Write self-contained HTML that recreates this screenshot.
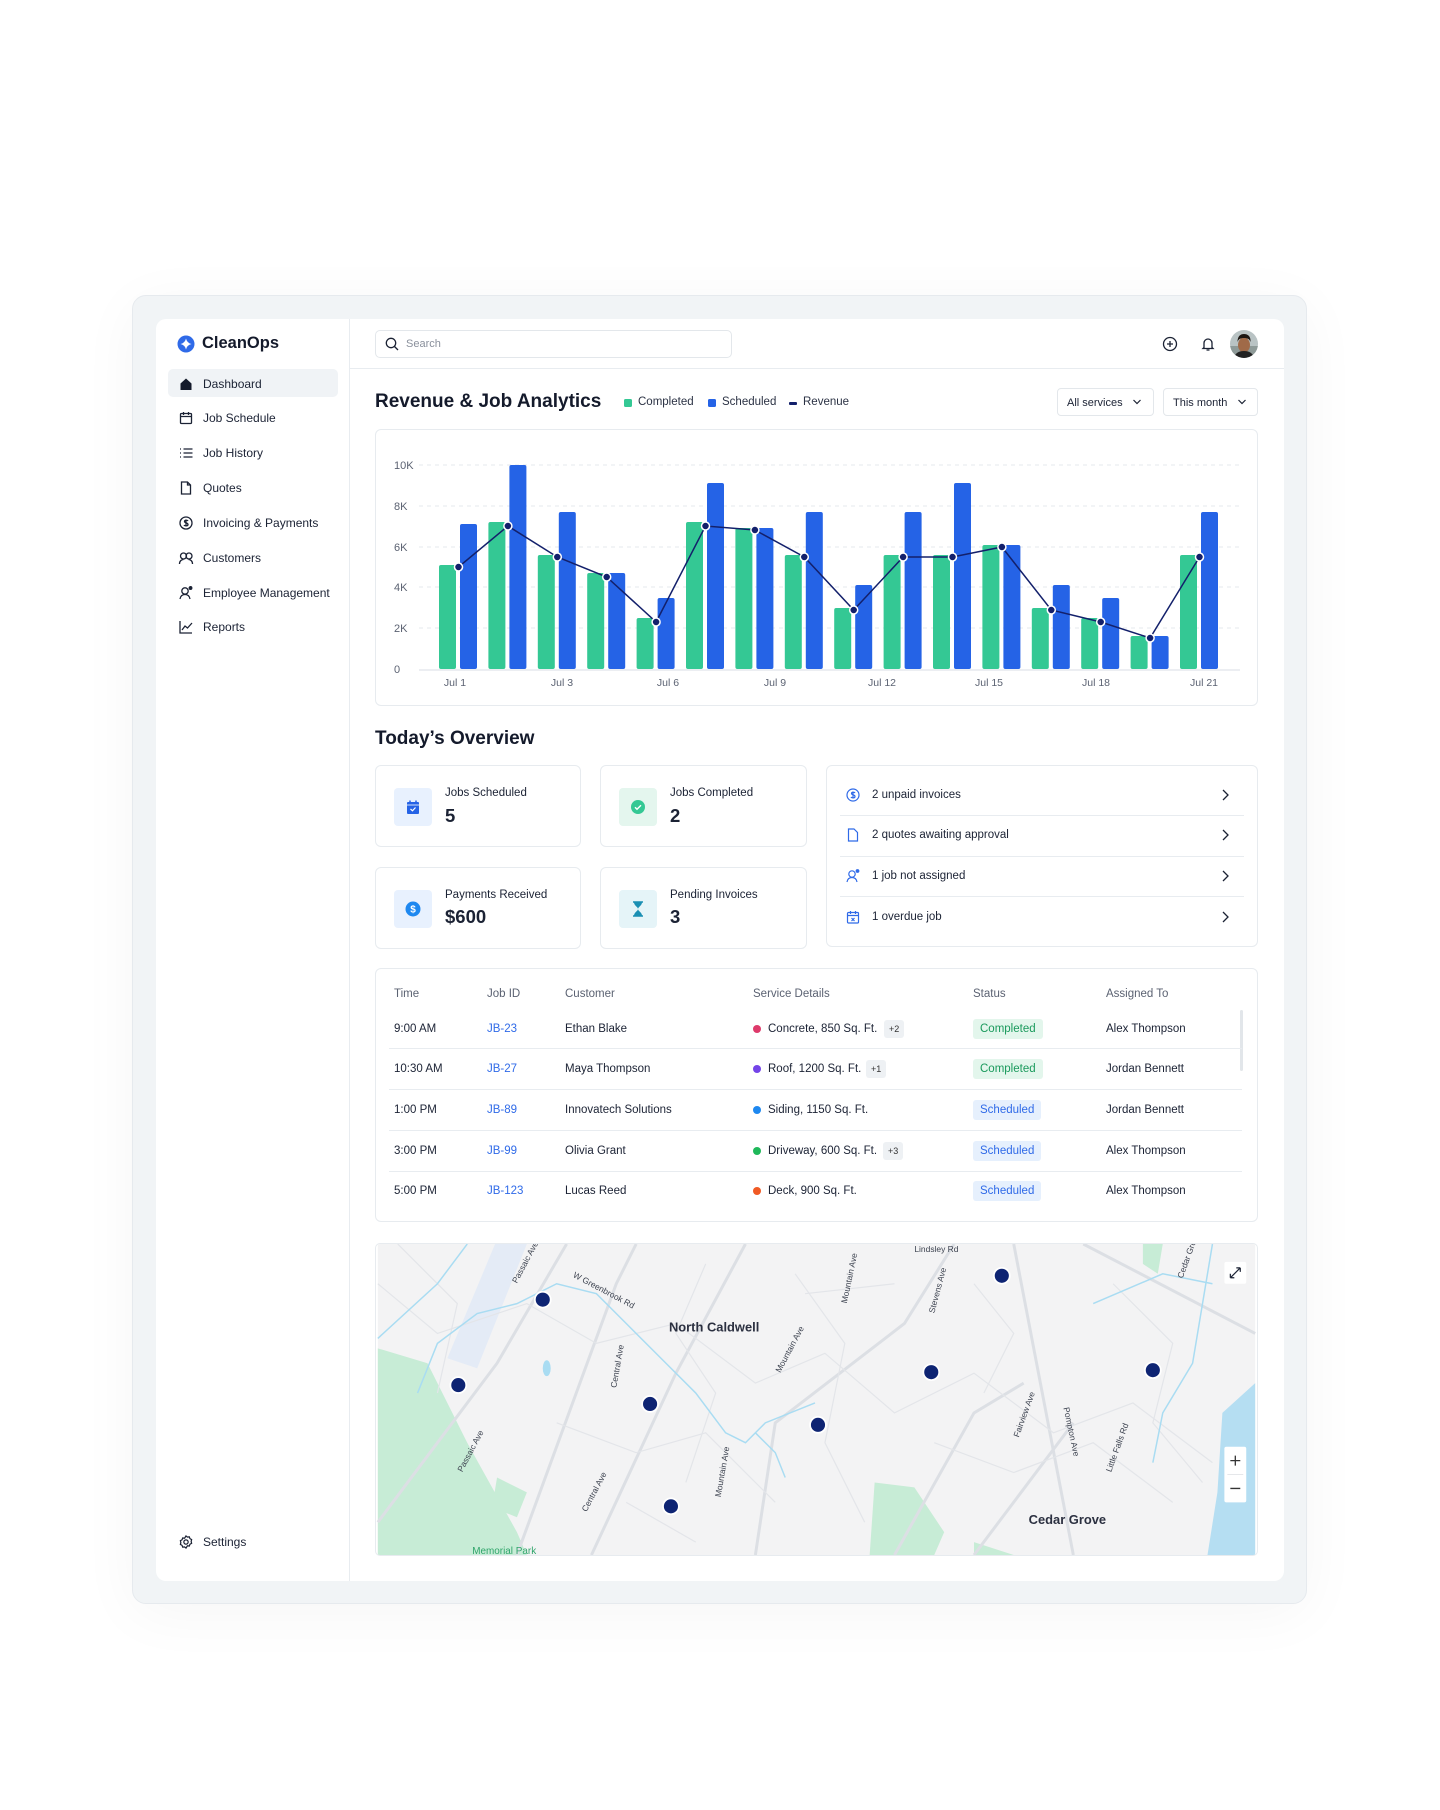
<!DOCTYPE html>
<html><head><meta charset="utf-8">
<style>
*{margin:0;padding:0;box-sizing:border-box}
body{width:1440px;height:1810px;background:#fff;font-family:"Liberation Sans",sans-serif;color:#1b2234;position:relative;overflow:hidden}
.a{position:absolute}
.frame{left:132px;top:295px;width:1175px;height:1309px;background:#f1f4f6;border:1px solid #e6eaee;border-radius:14px;box-shadow:0 10px 60px rgba(0,0,0,0.04)}
.inner{left:156px;top:319px;width:1128px;height:1262px;background:#fff;border-radius:10px}
.nav{left:203px;font-size:12px;color:#1b2234;transform:translateY(-50%)}
.ic{transform:translate(-50%,-50%)}
.card{background:#fff;border:1px solid #e7ebef;border-radius:6px}
.sm{font-size:12px}
.th{font-size:11.5px;color:#5b6272;transform:translateY(-50%)}
.td{font-size:11.5px;color:#1b2234;transform:translateY(-50%)}
.jid{color:#2f6ae8}
.badge{font-size:11.5px;padding:4px 7px;border-radius:3px;transform:translateY(-50%)}
.bc{background:#e3f6ec;color:#1a9a5c}
.bs{background:#e6f0fd;color:#2f6ae8}
.plus{font-size:9px;background:#eef1f4;color:#333;padding:4px 5px;border-radius:3px;transform:translateY(-50%)}
.dot{width:8px;height:8px;border-radius:50%;transform:translateY(-50%)}
.rowline{left:389px;width:853px;height:1px;background:#e8ecf0}
</style></head><body>
<div class="a frame"></div>
<div class="a inner"></div>
<div class="a" style="left:349px;top:319px;width:1px;height:1262px;background:#e8ecf0"></div>
<div class="a" style="left:350px;top:368px;width:934px;height:1px;background:#e8ecf0"></div>

<svg class="a" style="left:177px;top:335px" width="18" height="18" viewBox="0 0 18 18"><circle cx="9" cy="9" r="8.5" fill="#2f6ae8"/><path d="M9 3.5 Q10 8 14.5 9 Q10 10 9 14.5 Q8 10 3.5 9 Q8 8 9 3.5Z" fill="#fff"/></svg>
<div class="a" style="left:202px;top:334px;font-size:16.5px;font-weight:600;color:#141a2b">CleanOps</div>

<div class="a" style="left:168px;top:369px;width:170px;height:28px;background:#f0f3f6;border-radius:5px"></div>
<svg class="a ic" style="left:186px;top:384px" width="14" height="14" viewBox="0 0 14 14"><path d="M1.5 6.5 L7 1.5 L12.5 6.5 V13 H1.5Z" fill="#141a2b"/></svg>
<div class="a nav" style="top:384px">Dashboard</div>
<svg class="a ic" style="left:186px;top:418px" width="14" height="14" viewBox="0 0 14 14" fill="none" stroke="#1b2234" stroke-width="1.3"><rect x="1.5" y="2.5" width="11" height="10" rx="1"/><path d="M1.5 5.5h11M4.5 1v3M9.5 1v3"/></svg>
<div class="a nav" style="top:418px">Job Schedule</div>
<svg class="a ic" style="left:186px;top:453px" width="14" height="14" viewBox="0 0 14 14" fill="none" stroke="#1b2234" stroke-width="1.3"><path d="M4.5 3h9M4.5 7h9M4.5 11h9M1 3h1M1 7h1M1 11h1"/></svg>
<div class="a nav" style="top:453px">Job History</div>
<svg class="a ic" style="left:186px;top:488px" width="14" height="14" viewBox="0 0 14 14" fill="none" stroke="#1b2234" stroke-width="1.3"><path d="M2.5 1h6l3 3v9h-9z"/><path d="M8.5 1v3h3"/></svg>
<div class="a nav" style="top:488px">Quotes</div>
<svg class="a ic" style="left:186px;top:523px" width="14" height="14" viewBox="0 0 14 14" fill="none" stroke="#1b2234" stroke-width="1.3"><circle cx="7" cy="7" r="6"/><path d="M9 5c-.5-1-3.5-1.2-3.5.5S9 6.5 9 8.5 5.5 10 5 9M7 3.5v7"/></svg>
<div class="a nav" style="top:523px">Invoicing &amp; Payments</div>
<svg class="a ic" style="left:186px;top:558px" width="15" height="14" viewBox="0 0 15 14" fill="none" stroke="#1b2234" stroke-width="1.3"><circle cx="5" cy="5" r="3"/><circle cx="10.5" cy="5" r="3"/><path d="M1 13c0-3 2-4.5 4-4.5M14 13c0-3-2-4.5-4-4.5"/></svg>
<div class="a nav" style="top:558px">Customers</div>
<svg class="a ic" style="left:186px;top:593px" width="14" height="14" viewBox="0 0 14 14" fill="none" stroke="#1b2234" stroke-width="1.3"><circle cx="6" cy="5" r="3.2"/><path d="M1 13c.5-3 2.5-4.5 5-4.5s4.5 1.5 5 4.5"/><circle cx="11.5" cy="2" r="1.3" fill="#1b2234"/></svg>
<div class="a nav" style="top:593px">Employee Management</div>
<svg class="a ic" style="left:186px;top:627px" width="14" height="14" viewBox="0 0 14 14" fill="none" stroke="#1b2234" stroke-width="1.3"><path d="M1 1v12h12M3 10l3-4 2.5 2L13 3"/></svg>
<div class="a nav" style="top:627px">Reports</div>
<svg class="a ic" style="left:186px;top:1542px" width="15" height="15" viewBox="0 0 16 16" fill="none" stroke="#1b2234" stroke-width="1.3"><circle cx="8" cy="8" r="2.3"/><path d="M8 1.5l1.5 1.3 2-.3.7 1.9 1.8 1-.5 2 .5 2-1.8 1-.7 1.9-2-.3L8 14.5l-1.5-1.3-2 .3-.7-1.9-1.8-1 .5-2-.5-2 1.8-1 .7-1.9 2 .3z"/></svg>
<div class="a nav" style="top:1542px">Settings</div>

<div class="a" style="left:375px;top:330px;width:357px;height:28px;border:1px solid #e3e7eb;border-radius:5px"></div>
<svg class="a" style="left:385px;top:337px" width="14" height="14" viewBox="0 0 14 14" fill="none" stroke="#1b2234" stroke-width="1.3"><circle cx="6" cy="6" r="4.7"/><path d="M9.5 9.5l3.5 3.5"/></svg>
<div class="a" style="left:406px;top:338px;font-size:11px;color:#8a909c">Search</div>
<svg class="a ic" style="left:1170px;top:344px" width="15" height="15" viewBox="0 0 15 15" fill="none" stroke="#1b2234" stroke-width="1.3"><circle cx="7.5" cy="7.5" r="6.5"/><path d="M7.5 4.5v6M4.5 7.5h6"/></svg>
<svg class="a ic" style="left:1208px;top:344px" width="14" height="15" viewBox="0 0 14 15" fill="none" stroke="#1b2234" stroke-width="1.3"><path d="M3 11V6.5a4 4 0 0 1 8 0V11l1 1H2z"/><path d="M5.5 13.5h3"/></svg>
<svg class="a" style="left:1230px;top:330px" width="28" height="28" viewBox="0 0 28 28"><defs><clipPath id="av"><circle cx="14" cy="14" r="14"/></clipPath></defs><g clip-path="url(#av)"><rect width="28" height="28" fill="#b9c3c4"/><rect y="16" width="28" height="12" fill="#8e9a98"/><ellipse cx="14" cy="15" rx="6" ry="7.5" fill="#a06a48"/><path d="M7.5 12c0-6 3-8 6.5-8s7 2 6.5 8c-1-3-3-4-6.5-4s-5.5 1-6.5 4z" fill="#1c1612"/><path d="M4 28c1-5 5-7 10-7s9 2 10 7z" fill="#222"/></g></svg>

<div class="a" style="left:375px;top:391px;font-size:19px;font-weight:600;color:#141a2b">Revenue &amp; Job Analytics</div>
<div class="a" style="left:624px;top:399px;width:8px;height:8px;background:#34c894;border-radius:1.5px"></div>
<div class="a sm" style="left:638px;top:396px;color:#2b3244;font-size:11.5px">Completed</div>
<div class="a" style="left:708px;top:399px;width:8px;height:8px;background:#2563e6;border-radius:1.5px"></div>
<div class="a sm" style="left:722px;top:396px;color:#2b3244;font-size:11.5px">Scheduled</div>
<div class="a" style="left:789px;top:402px;width:8px;height:2.5px;background:#13206b;border-radius:1px"></div>
<div class="a sm" style="left:803px;top:396px;color:#2b3244;font-size:11.5px">Revenue</div>
<div class="a" style="left:1057px;top:388px;width:97px;height:28px;border:1px solid #e3e7eb;border-radius:4px;font-size:11px;padding:8px 0 0 9px;color:#1b2234">All services</div>
<svg class="a" style="left:1132px;top:398px" width="10" height="8" viewBox="0 0 10 8" fill="none" stroke="#1b2234" stroke-width="1.2"><path d="M1.5 2l3.5 3.5L8.5 2"/></svg>
<div class="a" style="left:1163px;top:388px;width:95px;height:28px;border:1px solid #e3e7eb;border-radius:4px;font-size:11px;padding:8px 0 0 9px;color:#1b2234">This month</div>
<svg class="a" style="left:1237px;top:398px" width="10" height="8" viewBox="0 0 10 8" fill="none" stroke="#1b2234" stroke-width="1.2"><path d="M1.5 2l3.5 3.5L8.5 2"/></svg>

<div class="a card" style="left:375px;top:429px;width:883px;height:277px"></div>
<svg class="a" style="left:375px;top:429px" width="883" height="277" viewBox="375 429 883 277" font-family="Liberation Sans, sans-serif">
<g stroke="#e6e9ee" stroke-width="1" stroke-dasharray="4 4">
<line x1="419" y1="465" x2="1240" y2="465"/><line x1="419" y1="506" x2="1240" y2="506"/><line x1="419" y1="547" x2="1240" y2="547"/><line x1="419" y1="587" x2="1240" y2="587"/><line x1="419" y1="628" x2="1240" y2="628"/>
</g>
<line x1="419" y1="670" x2="1240" y2="670" stroke="#e6e9ee" stroke-width="1.5"/>
<g font-size="11" fill="#5b6272">
<text x="394" y="469">10K</text><text x="394" y="510">8K</text><text x="394" y="551">6K</text><text x="394" y="591">4K</text><text x="394" y="632">2K</text><text x="394" y="673">0</text>
</g>
<g font-size="10.5" fill="#5b6272" text-anchor="middle">
<text x="455" y="686">Jul 1</text><text x="562" y="686">Jul 3</text><text x="668" y="686">Jul 6</text><text x="775" y="686">Jul 9</text><text x="882" y="686">Jul 12</text><text x="989" y="686">Jul 15</text><text x="1096" y="686">Jul 18</text><text x="1204" y="686">Jul 21</text>
</g>
<g fill="#34c894">
<rect x="439" y="565" width="17" height="104" rx="2"/>
<rect x="488.4" y="522" width="17" height="147" rx="2"/>
<rect x="537.8" y="555" width="17" height="114" rx="2"/>
<rect x="587.2" y="573" width="17" height="96" rx="2"/>
<rect x="636.6" y="618" width="17" height="51" rx="2"/>
<rect x="686" y="522" width="17" height="147" rx="2"/>
<rect x="735.4" y="528" width="17" height="141" rx="2"/>
<rect x="784.8" y="555" width="17" height="114" rx="2"/>
<rect x="834.2" y="608" width="17" height="61" rx="2"/>
<rect x="883.6" y="555" width="17" height="114" rx="2"/>
<rect x="933" y="555" width="17" height="114" rx="2"/>
<rect x="982.4" y="545" width="17" height="124" rx="2"/>
<rect x="1031.8" y="608" width="17" height="61" rx="2"/>
<rect x="1081.2" y="618" width="17" height="51" rx="2"/>
<rect x="1130.6" y="636" width="17" height="33" rx="2"/>
<rect x="1180" y="555" width="17" height="114" rx="2"/>
</g>
<g fill="#2563e6">
<rect x="460" y="524" width="17" height="145" rx="2"/>
<rect x="509.4" y="465" width="17" height="204" rx="2"/>
<rect x="558.8" y="512" width="17" height="157" rx="2"/>
<rect x="608.2" y="573" width="17" height="96" rx="2"/>
<rect x="657.6" y="598" width="17" height="71" rx="2"/>
<rect x="707" y="483" width="17" height="186" rx="2"/>
<rect x="756.4" y="528" width="17" height="141" rx="2"/>
<rect x="805.8" y="512" width="17" height="157" rx="2"/>
<rect x="855.2" y="585" width="17" height="84" rx="2"/>
<rect x="904.6" y="512" width="17" height="157" rx="2"/>
<rect x="954" y="483" width="17" height="186" rx="2"/>
<rect x="1003.4" y="545" width="17" height="124" rx="2"/>
<rect x="1052.8" y="585" width="17" height="84" rx="2"/>
<rect x="1102.2" y="598" width="17" height="71" rx="2"/>
<rect x="1151.6" y="636" width="17" height="33" rx="2"/>
<rect x="1201" y="512" width="17" height="157" rx="2"/>
</g>
<polyline fill="none" stroke="#13206b" stroke-width="1.5" points="458.5,567 507.9,526 557.3,557 606.7,577 656.1,622 705.5,526 754.9,530 804.3,557 853.7,610 903.1,557 952.5,557 1001.9,547 1051.3,610 1100.7,622 1150.1,638 1199.5,557"/>
<g fill="#13206b" stroke="#fff" stroke-width="1.5">
<circle cx="458.5" cy="567" r="4"/><circle cx="507.9" cy="526" r="4"/><circle cx="557.3" cy="557" r="4"/><circle cx="606.7" cy="577" r="4"/><circle cx="656.1" cy="622" r="4"/><circle cx="705.5" cy="526" r="4"/><circle cx="754.9" cy="530" r="4"/><circle cx="804.3" cy="557" r="4"/><circle cx="853.7" cy="610" r="4"/><circle cx="903.1" cy="557" r="4"/><circle cx="952.5" cy="557" r="4"/><circle cx="1001.9" cy="547" r="4"/><circle cx="1051.3" cy="610" r="4"/><circle cx="1100.7" cy="622" r="4"/><circle cx="1150.1" cy="638" r="4"/><circle cx="1199.5" cy="557" r="4"/>
</g>
</svg>

<div class="a" style="left:375px;top:728px;font-size:19px;font-weight:600;color:#141a2b">Today’s Overview</div>
<div class="a card" style="left:375px;top:765px;width:206px;height:82px"></div>
<div class="a card" style="left:600px;top:765px;width:207px;height:82px"></div>
<div class="a card" style="left:375px;top:867px;width:206px;height:82px"></div>
<div class="a card" style="left:600px;top:867px;width:207px;height:82px"></div>
<div class="a" style="left:394px;top:788px;width:38px;height:38px;background:#e8f1fe;border-radius:4px"></div>
<svg class="a ic" style="left:413px;top:807px" width="16" height="16" viewBox="0 0 16 16"><rect x="2" y="3" width="12" height="12" rx="1" fill="#2563e6"/><path d="M5 1.5v3M11 1.5v3" stroke="#2563e6" stroke-width="1.5"/><path d="M2 6h12" stroke="#fff" stroke-width=".8"/><path d="M5.5 10l2 1.8 3-3.3" stroke="#fff" stroke-width="1.2" fill="none"/></svg>
<div class="a" style="left:445px;top:787px;font-size:11.5px">Jobs Scheduled</div>
<div class="a" style="left:445px;top:805px;font-size:18.5px;font-weight:600">5</div>
<div class="a" style="left:619px;top:788px;width:38px;height:38px;background:#e4f6ee;border-radius:4px"></div>
<svg class="a ic" style="left:638px;top:807px" width="16" height="16" viewBox="0 0 16 16"><circle cx="8" cy="8" r="7" fill="#34c894"/><path d="M5 8.2l2 2 4-4" stroke="#fff" stroke-width="1.4" fill="none"/></svg>
<div class="a" style="left:670px;top:787px;font-size:11.5px">Jobs Completed</div>
<div class="a" style="left:670px;top:805px;font-size:18.5px;font-weight:600">2</div>
<div class="a" style="left:394px;top:890px;width:38px;height:38px;background:#e8f1fe;border-radius:4px"></div>
<svg class="a ic" style="left:413px;top:909px" width="16" height="16" viewBox="0 0 16 16"><circle cx="8" cy="8" r="7.5" fill="#1e88f0"/><text x="8" y="11.5" font-size="10" font-weight="bold" fill="#fff" text-anchor="middle" font-family="Liberation Sans">$</text></svg>
<div class="a" style="left:445px;top:889px;font-size:11.5px">Payments Received</div>
<div class="a" style="left:445px;top:906px;font-size:18.5px;font-weight:600">$600</div>
<div class="a" style="left:619px;top:890px;width:38px;height:38px;background:#e5f4f8;border-radius:4px"></div>
<svg class="a ic" style="left:638px;top:909px" width="14" height="16" viewBox="0 0 14 16"><path d="M2 1h10M2 15h10" stroke="#1a8fb3" stroke-width="1.5"/><path d="M3 1.5h8c0 3-4 4.5-4 6.5s4 3.5 4 6.5H3c0-3 4-4.5 4-6.5S3 4.5 3 1.5z" fill="#1a8fb3"/></svg>
<div class="a" style="left:670px;top:889px;font-size:11.5px">Pending Invoices</div>
<div class="a" style="left:670px;top:906px;font-size:18.5px;font-weight:600">3</div>

<div class="a card" style="left:826px;top:765px;width:432px;height:182px"></div>
<div class="a" style="left:840px;top:815px;width:404px;height:1px;background:#e8ecf0"></div>
<div class="a" style="left:840px;top:856px;width:404px;height:1px;background:#e8ecf0"></div>
<div class="a" style="left:840px;top:896px;width:404px;height:1px;background:#e8ecf0"></div>
<svg class="a ic" style="left:853px;top:795px" width="14" height="14" viewBox="0 0 14 14" fill="none" stroke="#2f6ae8" stroke-width="1.2"><circle cx="7" cy="7" r="6"/><path d="M9 5c-.5-1-3.5-1.2-3.5.5S9 6.5 9 8.5 5.5 10 5 9M7 3.5v7"/></svg>
<div class="a td" style="left:872px;top:795px">2 unpaid invoices</div>
<svg class="a ic" style="left:853px;top:835px" width="12" height="14" viewBox="0 0 12 14" fill="none" stroke="#2f6ae8" stroke-width="1.2"><path d="M1.5 1h5.5l3.5 3.5V13h-9z"/></svg>
<div class="a td" style="left:872px;top:835px">2 quotes awaiting approval</div>
<svg class="a ic" style="left:853px;top:876px" width="14" height="14" viewBox="0 0 14 14" fill="none" stroke="#2f6ae8" stroke-width="1.2"><circle cx="6" cy="5" r="3.2"/><path d="M1 13c.5-3 2.5-4.5 5-4.5s4.5 1.5 5 4.5"/><circle cx="11.5" cy="2" r="1.3" fill="#2f6ae8"/></svg>
<div class="a td" style="left:872px;top:876px">1 job not assigned</div>
<svg class="a ic" style="left:853px;top:917px" width="13" height="14" viewBox="0 0 13 14" fill="none" stroke="#2f6ae8" stroke-width="1.2"><rect x="1" y="2.5" width="11" height="10.5" rx="1"/><path d="M1 5.5h11M4 1v3M9 1v3M5 8l3 3M8 8l-3 3"/></svg>
<div class="a td" style="left:872px;top:917px">1 overdue job</div>
<svg class="a" style="left:1221px;top:789px" width="8" height="12" viewBox="0 0 8 12" fill="none" stroke="#1b2234" stroke-width="1.3"><path d="M2 1l5 5-5 5"/></svg>
<svg class="a" style="left:1221px;top:829px" width="8" height="12" viewBox="0 0 8 12" fill="none" stroke="#1b2234" stroke-width="1.3"><path d="M2 1l5 5-5 5"/></svg>
<svg class="a" style="left:1221px;top:870px" width="8" height="12" viewBox="0 0 8 12" fill="none" stroke="#1b2234" stroke-width="1.3"><path d="M2 1l5 5-5 5"/></svg>
<svg class="a" style="left:1221px;top:911px" width="8" height="12" viewBox="0 0 8 12" fill="none" stroke="#1b2234" stroke-width="1.3"><path d="M2 1l5 5-5 5"/></svg>

<div class="a card" style="left:375px;top:968px;width:883px;height:254px"></div>
<div class="a" style="left:1240px;top:1010px;width:3px;height:61px;background:#e2e6ea;border-radius:2px"></div>
<div class="a th" style="left:394px;top:994px">Time</div>
<div class="a th" style="left:487px;top:994px">Job ID</div>
<div class="a th" style="left:565px;top:994px">Customer</div>
<div class="a th" style="left:753px;top:994px">Service Details</div>
<div class="a th" style="left:973px;top:994px">Status</div>
<div class="a th" style="left:1106px;top:994px">Assigned To</div>
<div class="a rowline" style="top:1048px"></div>
<div class="a rowline" style="top:1089px"></div>
<div class="a rowline" style="top:1130px"></div>
<div class="a rowline" style="top:1171px"></div>

<div class="a td" style="left:394px;top:1029px">9:00 AM</div>
<div class="a td jid" style="left:487px;top:1029px">JB-23</div>
<div class="a td" style="left:565px;top:1029px">Ethan Blake</div>
<div class="a dot" style="left:753px;top:1029px;background:#de3a6b"></div>
<div class="a td" style="left:768px;top:1029px">Concrete, 850 Sq. Ft.</div>
<div class="a plus" style="left:884px;top:1029px">+2</div>
<div class="a badge bc" style="left:973px;top:1029px">Completed</div>
<div class="a td" style="left:1106px;top:1029px">Alex Thompson</div>

<div class="a td" style="left:394px;top:1069px">10:30 AM</div>
<div class="a td jid" style="left:487px;top:1069px">JB-27</div>
<div class="a td" style="left:565px;top:1069px">Maya Thompson</div>
<div class="a dot" style="left:753px;top:1069px;background:#7444e8"></div>
<div class="a td" style="left:768px;top:1069px">Roof, 1200 Sq. Ft.</div>
<div class="a plus" style="left:866px;top:1069px">+1</div>
<div class="a badge bc" style="left:973px;top:1069px">Completed</div>
<div class="a td" style="left:1106px;top:1069px">Jordan Bennett</div>

<div class="a td" style="left:394px;top:1110px">1:00 PM</div>
<div class="a td jid" style="left:487px;top:1110px">JB-89</div>
<div class="a td" style="left:565px;top:1110px">Innovatech Solutions</div>
<div class="a dot" style="left:753px;top:1110px;background:#1e88f0"></div>
<div class="a td" style="left:768px;top:1110px">Siding, 1150 Sq. Ft.</div>
<div class="a badge bs" style="left:973px;top:1110px">Scheduled</div>
<div class="a td" style="left:1106px;top:1110px">Jordan Bennett</div>

<div class="a td" style="left:394px;top:1151px">3:00 PM</div>
<div class="a td jid" style="left:487px;top:1151px">JB-99</div>
<div class="a td" style="left:565px;top:1151px">Olivia Grant</div>
<div class="a dot" style="left:753px;top:1151px;background:#1fb85a"></div>
<div class="a td" style="left:768px;top:1151px">Driveway, 600 Sq. Ft.</div>
<div class="a plus" style="left:883px;top:1151px">+3</div>
<div class="a badge bs" style="left:973px;top:1151px">Scheduled</div>
<div class="a td" style="left:1106px;top:1151px">Alex Thompson</div>

<div class="a td" style="left:394px;top:1191px">5:00 PM</div>
<div class="a td jid" style="left:487px;top:1191px">JB-123</div>
<div class="a td" style="left:565px;top:1191px">Lucas Reed</div>
<div class="a dot" style="left:753px;top:1191px;background:#f05a24"></div>
<div class="a td" style="left:768px;top:1191px">Deck, 900 Sq. Ft.</div>
<div class="a badge bs" style="left:973px;top:1191px">Scheduled</div>
<div class="a td" style="left:1106px;top:1191px">Alex Thompson</div>

<svg class="a" style="left:375px;top:1243px;border:1px solid #e7ebef;border-radius:5px" width="883" height="313" viewBox="0 0 883 313" font-family="Liberation Sans, sans-serif">
<rect width="883" height="313" fill="#f3f3f4"/>
<path d="M118 0 L150 0 L100 125 L70 115 Z" fill="#e4ebf6"/>
<path d="M0 105 L50 120 L90 200 L140 290 L150 313 L0 313 Z" fill="#c7ecd6"/>
<path d="M120 235 L150 250 L140 275 L115 265Z" fill="#c7ecd6"/>
<path d="M500 240 L540 245 L570 290 L560 313 L495 313Z" fill="#c7ecd6"/>
<path d="M850 170 L883 140 L883 313 L835 313 L845 250Z" fill="#b5def2"/>
<path d="M770 0 L790 0 L785 30 L770 20Z" fill="#c7ecd6"/>
<path d="M600 300 L640 313 L600 313Z" fill="#c7ecd6"/>
<path d="M80 255 L125 285 L110 313 L60 313Z" fill="#c7ecd6"/>
<g fill="none" stroke="#dcdfe4" stroke-width="3">
<path d="M0 280 L120 120 L190 0"/><path d="M140 313 L240 40 L260 0"/><path d="M215 313 L300 130 L370 0"/>
<path d="M380 313 L400 180 L530 80 L580 0"/><path d="M640 0 L700 313"/><path d="M710 0 L883 90"/><path d="M520 313 L600 170 L650 140"/><path d="M600 313 L700 180"/>
</g>
<g fill="none" stroke="#e3e5e9" stroke-width="1.2">
<path d="M0 40 L60 90 L150 60 L220 100 L300 80 L380 140 L450 110 L520 170 L600 130 L680 190 L760 160 L840 220"/>
<path d="M20 0 L80 60 L60 150"/><path d="M330 20 L300 90 L340 150 L310 240"/><path d="M420 30 L470 100 L450 200 L490 280"/>
<path d="M180 180 L260 210 L330 190 L400 260"/><path d="M560 200 L640 230 L720 200 L800 260"/><path d="M740 40 L800 100 L780 180 L830 240"/>
<path d="M250 260 L320 300"/><path d="M600 40 L640 90 L610 150"/><path d="M430 50 L520 40"/>
</g>
<g fill="none" stroke="#a9dcf2" stroke-width="1.5">
<path d="M0 95 L60 40 L90 0"/><path d="M40 150 L60 100 L100 70 L140 60 L180 40 L220 50 L250 80 L290 120 L320 150 L350 190 L370 200 L390 180 L440 160"/>
<path d="M380 190 L400 210 L410 235"/><path d="M840 0 L830 60 L820 120 L790 170 L780 220"/><path d="M720 60 L790 30 L840 40"/>
</g>
<ellipse cx="170" cy="125" rx="4" ry="8" fill="#a9dcf2"/>
<g font-size="8.5" fill="#3d4350">
<text x="140" y="40" transform="rotate(-62 140 40)">Passaic Ave</text>
<text x="196" y="33" transform="rotate(28 196 33)">W Greenbrook Rd</text>
<text x="240" y="145" transform="rotate(-80 240 145)">Central Ave</text>
<text x="405" y="130" transform="rotate(-62 405 130)">Mountain Ave</text>
<text x="472" y="60" transform="rotate(-78 472 60)">Mountain Ave</text>
<text x="345" y="255" transform="rotate(-80 345 255)">Mountain Ave</text>
<text x="540" y="8">Lindsley Rd</text>
<text x="560" y="70" transform="rotate(-75 560 70)">Stevens Ave</text>
<text x="645" y="195" transform="rotate(-70 645 195)">Fairview Ave</text>
<text x="690" y="165" transform="rotate(78 690 165)">Pompton Ave</text>
<text x="738" y="230" transform="rotate(-70 738 230)">Little Falls Rd</text>
<text x="85" y="230" transform="rotate(-62 85 230)">Passaic Ave</text>
<text x="210" y="270" transform="rotate(-62 210 270)">Central Ave</text>
<text x="810" y="35" transform="rotate(-70 810 35)">Cedar Gro</text>
</g>
<text x="293" y="88" font-size="13" font-weight="600" fill="#2b3040">North Caldwell</text>
<text x="655" y="282" font-size="13" font-weight="600" fill="#2b3040">Cedar Grove</text>
<text x="95" y="312" font-size="10" fill="#2fa56a">Memorial Park</text>
<g fill="#0e2473" stroke="#fff" stroke-width="1.8">
<circle cx="166" cy="56" r="8"/><circle cx="81" cy="142" r="8"/><circle cx="274" cy="161" r="8"/><circle cx="295" cy="264" r="8"/><circle cx="443" cy="182" r="8"/><circle cx="557" cy="129" r="8"/><circle cx="628" cy="32" r="8"/><circle cx="780" cy="127" r="8"/>
</g>
<rect x="852" y="18" width="22" height="22" rx="2" fill="#fff"/>
<path d="M858 34l10-10M858 34v-4M858 34h4M868 24h-4M868 24v4" stroke="#1b2234" stroke-width="1.2" fill="none"/>
<rect x="852" y="204" width="22" height="56" rx="2" fill="#fff"/>
<path d="M855 232h16" stroke="#e5e7ea"/>
<path d="M863 213v10M858 218h10M858 246h10" stroke="#333" stroke-width="1.3"/>
</svg>
</body></html>
